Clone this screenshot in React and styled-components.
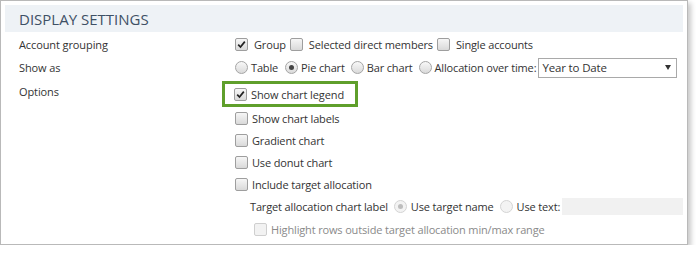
import React from 'react';
import styled, { createGlobalStyle } from 'styled-components';

const GlobalStyle = createGlobalStyle`
  body {
    margin: 0;
    background: #fff;
    font-family: "Segoe UI", "Open Sans", "Liberation Sans", sans-serif;
  }
`;

const Card = styled.section`
  width: 688px;
  height: 245px;
  border: 1px solid #b9b9b9;
  box-shadow: 3px 3px 5px rgba(0, 0, 0, 0.22);
  padding: 4px;
  box-sizing: border-box;
  background: #fff;
`;

const Header = styled.div`
  height: 27px;
  background: #eef2f6;
  padding-left: 14px;
  display: flex;
  align-items: center;
  font-size: 15px;
  color: #3e5065;
`;

const Body = styled.div`
  display: grid;
  grid-template-columns: 215px 1fr;
  padding-left: 14px;
  padding-top: 1px;
`;

const Label = styled.div`
  font-size: 11px;
  letter-spacing: -0.1px;
  color: #333;
  height: ${p => p.h || 23}px;
  display: flex;
  align-items: ${p => (p.top ? 'flex-start' : 'center')};
  padding-top: ${p => (p.top ? 5 : 0)}px;
  box-sizing: border-box;
`;

const Line = styled.div`
  display: flex;
  align-items: center;
  height: ${p => p.h || 23}px;
  padding-left: ${p => p.indent || 0}px;
  font-size: 11px;
  letter-spacing: -0.15px;
  color: ${p => (p.disabled ? '#8a8a8a' : '#333')};
  white-space: nowrap;
`;

const Options = styled.div`
  display: flex;
  flex-direction: column;
`;

const Highlight = styled.div`
  align-self: flex-start;
  margin-left: -12px;
  margin-top: 2px;
  border: 3px solid #5f9f2b;
  padding: 0 11px 0 9px;
  height: 20px;
  display: flex;
  align-items: center;
  font-size: 11px;
  letter-spacing: -0.1px;
  color: #333;
`;

const Box = styled.span`
  width: 11px;
  height: 11px;
  border: 1px solid ${p => (p.disabled ? '#cfcfcf' : '#9e9e9e')};
  border-radius: 2px;
  background: ${p =>
    p.disabled ? '#f2f2f2' : 'linear-gradient(#f6f6f6, #d9d9d9)'};
  display: inline-flex;
  align-items: center;
  justify-content: center;
  margin-right: ${p => p.gap || 6}px;
  margin-left: ${p => p.lead || 0}px;
  flex: none;
`;

const Dot = styled.span`
  width: 11px;
  height: 11px;
  border: 1px solid ${p => (p.disabled ? '#d4d4d4' : '#a5a5a5')};
  border-radius: 50%;
  background: ${p =>
    p.disabled ? '#f3f3f3' : 'linear-gradient(#f8f8f8, #dadada)'};
  display: inline-flex;
  align-items: center;
  justify-content: center;
  margin-right: ${p => p.gap || 3}px;
  margin-left: ${p => p.lead || 0}px;
  flex: none;
  &::after {
    content: '';
    display: ${p => (p.on ? 'block' : 'none')};
    width: 5px;
    height: 5px;
    border-radius: 50%;
    background: ${p => (p.disabled ? '#bdbdbd' : '#444')};
  }
`;

const Select = styled.div`
  width: 129px;
  height: 18px;
  border: 1px solid #a9a9a9;
  margin-left: 2px;
  display: flex;
  align-items: center;
  justify-content: space-between;
  padding: 0 5px 0 3px;
  font-size: 11.5px;
  color: #333;
  background: #fff;
`;

const Caret = styled.span`
  width: 0;
  height: 0;
  border-left: 3px solid transparent;
  border-right: 3px solid transparent;
  border-top: 5px solid #333;
`;

const TextField = styled.div`
  flex: 1;
  height: 17px;
  margin-left: 2px;
  background: #f1f1f1;
`;

const Check = ({ on, disabled, gap, lead }) => (
  <Box disabled={disabled} gap={gap} lead={lead}>
    {on && (
      <svg width="9" height="9" viewBox="0 0 9 9">
        <path d="M1.2 4.6 L3.5 7 L7.8 1.6" fill="none" stroke="#222" strokeWidth="1.7" />
      </svg>
    )}
  </Box>
);

export default function App() {
  return (
    <>
      <GlobalStyle />
      <Card>
        <Header>DISPLAY SETTINGS</Header>
        <Body>
          <Label>Account grouping</Label>
          <Line>
            <Check on lead={1} />
            Group
            <Check lead={4} gap={6} />
            Selected direct members
            <Check lead={4} gap={6} />
            Single accounts
          </Line>

          <Label>Show as</Label>
          <Line>
            <Dot lead={1} />
            Table
            <Dot on lead={7} />
            Pie chart
            <Dot lead={6} />
            Bar chart
            <Dot lead={6} />
            Allocation over time:
            <Select>
              Year to Date
              <Caret />
            </Select>
          </Line>

          <Label top h={180}>Options</Label>
          <Options>
            <Highlight>
              <Check on gap={4} />
              Show chart legend
            </Highlight>
            <Line h={22}>
              <Check lead={1} gap={4} />
              Show chart labels
            </Line>
            <Line h={22}>
              <Check lead={1} gap={4} />
              Gradient chart
            </Line>
            <Line h={22}>
              <Check lead={1} gap={4} />
              Use donut chart
            </Line>
            <Line h={22}>
              <Check lead={1} gap={4} />
              Include target allocation
            </Line>
            <Line h={23} indent={16}>
              Target allocation chart label
              <Dot on disabled lead={6} gap={4} />
              Use target name
              <Dot disabled lead={6} gap={4} />
              Use text:
              <TextField />
            </Line>
            <Line h={22} indent={20} disabled>
              <Check disabled gap={4} />
              Highlight rows outside target allocation min/max range
            </Line>
          </Options>
        </Body>
      </Card>
    </>
  );
}
